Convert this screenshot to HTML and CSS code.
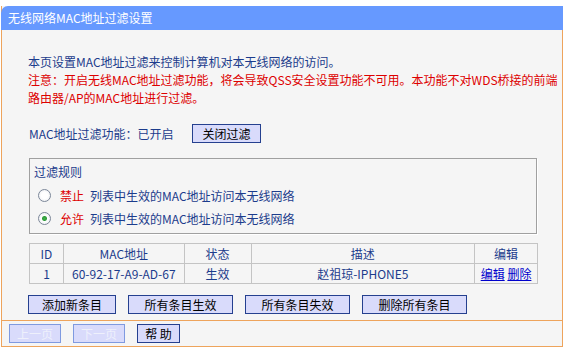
FILE: index.html
```html
<!DOCTYPE html>
<html lang="zh-CN">
<head>
    <meta charset="UTF-8">
    <title>无线网络MAC地址过滤设置</title>
    <link rel="stylesheet" href="styles.css">
</head>
<body>
    <div class="panel">
        <div class="title">无线网络MAC地址过滤设置</div>

        <div class="content">
            <p class="intro">本页设置MAC地址过滤来控制计算机对本无线网络的访问。</p>
            <p class="warn">注意：开启无线MAC地址过滤功能，将会导致QSS安全设置功能不可用。本功能不对WDS桥接的前端<br>路由器/AP的MAC地址进行过滤。</p>

            <div class="status-row">
                <span class="status-label">MAC地址过滤功能：已开启</span>
                <button class="btn btn-close">关闭过滤</button>
            </div>

            <!-- 过滤规则 -->
            <div class="rules">
                <div class="rules-title">过滤规则</div>
                <label class="rule">
                    <input type="radio" name="rule" class="radio">
                    <span class="rule-key">禁止</span>
                    <span>列表中生效的MAC地址访问本无线网络</span>
                </label>
                <label class="rule">
                    <input type="radio" name="rule" class="radio" checked>
                    <span class="rule-key">允许</span>
                    <span>列表中生效的MAC地址访问本无线网络</span>
                </label>
            </div>

            <table class="list">
                <tr>
                    <th class="col-id">ID</th>
                    <th class="col-mac">MAC地址</th>
                    <th class="col-state">状态</th>
                    <th class="col-desc">描述</th>
                    <th class="col-edit">编辑</th>
                </tr>
                <tr>
                    <td>1</td>
                    <td>60-92-17-A9-AD-67</td>
                    <td>生效</td>
                    <td>赵祖琼-IPHONE5</td>
                    <td><a href="javascript:;">编辑</a> <a href="javascript:;">删除</a></td>
                </tr>
            </table>

            <div class="actions">
                <button class="btn btn-add">添加新条目</button>
                <button class="btn btn-wide">所有条目生效</button>
                <button class="btn btn-wide">所有条目失效</button>
                <button class="btn btn-wide">删除所有条目</button>
            </div>
        </div>

        <div class="footer">
            <button class="btn btn-page" disabled>上一页</button>
            <button class="btn btn-page" disabled>下一页</button>
            <button class="btn btn-help">帮 助</button>
        </div>
    </div>
</body>
</html>
```

FILE: styles.css
```css
/* 清除默认样式 */
*{
    padding: 0;
    margin: 0;
    box-sizing: border-box;
}

body{
    background-color: #fff;
    font-family: "Noto Sans CJK SC", sans-serif;
    font-size: 12px;
    color: #1c3c8c;
    padding-top: 6px;
}

.panel{
    width: 562px;
    margin-left: 1px;
    background-color: #f5f5f5;
    border: 1px solid #eea45c;
    border-top: none;
}

.title{
    height: 24px;
    line-height: 24px;
    margin: 0 -1px;
    padding-left: 7px;
    background-color: #6699ff;
    color: #fff;
    border-top-left-radius: 7px;
}

.content{
    padding: 23px 25px 6px 26px;
    border-bottom: 1px solid #eea45c;
}

.intro,
.warn{
    line-height: 18px;
    white-space: nowrap;
}

.warn{
    color: #dd0000;
}

.status-row{
    display: flex;
    align-items: center;
    height: 20px;
    margin-top: 16px;
    padding-left: 1px;
}

.status-label{
    width: 163px;
}

/* 按钮 */
.btn{
    height: 19px;
    font-family: inherit;
    font-size: 12px;
    color: #000;
    background-color: #d9dbfb;
    border: 1px solid #25408f;
    border-radius: 0;
    cursor: pointer;
}

.btn:disabled{
    color: #eef0fb;
    border-color: #7f9ae0;
    cursor: default;
}

.btn-close{ width: 69px; }
.btn-add{ width: 88px; }
.btn-wide{ width: 105px; }
.btn-page{ width: 52px; }
.btn-help{ width: 43px; }

/* 过滤规则 */
.rules{
    height: 76px;
    margin-top: 15px;
    margin-left: 1px;
    padding: 4px 4px 3px;
    border: 1px solid #a0a0a0;
    box-shadow: 1px 1px 0 #fff;
}

.rules-title{
    line-height: 18px;
    margin-bottom: 3px;
}

.rule{
    display: flex;
    align-items: center;
    height: 23px;
    padding-left: 4px;
}

.radio{
    appearance: none;
    width: 13px;
    height: 13px;
    margin-right: 9px;
    border: 1px solid #7c8799;
    border-radius: 50%;
    background: radial-gradient(circle, #ffffff 40%, #e6e8ec 100%);
}

.radio:checked{
    background: radial-gradient(circle, #3fb34a 0, #2f9a3a 2px, #ffffff 3px, #e6e8ec 100%);
}

.rule-key{
    color: #dd0000;
    margin-right: 6px;
}

/* 条目列表 */
.list{
    width: 509px;
    margin-top: 9px;
    margin-left: 1px;
    border-collapse: collapse;
    border: 1px solid #b8b8b8;
}

.list tr{
    height: 20px;
}

.list th,
.list td{
    height: 20px;
    padding: 0;
    font-weight: normal;
    line-height: 18px;
    text-align: center;
    border: 1px solid #c4c4c4;
}

.col-id{ width: 34px; }
.col-mac{ width: 121px; }
.col-state{ width: 67px; }
.col-desc{ width: 224px; }
.col-edit{ width: 63px; }

.list a{
    color: #0000cc;
}

.actions{
    display: flex;
    gap: 12px;
    margin-top: 11px;
}

.footer{
    display: flex;
    gap: 12px;
    padding: 3px 7px 3px;
}
```
